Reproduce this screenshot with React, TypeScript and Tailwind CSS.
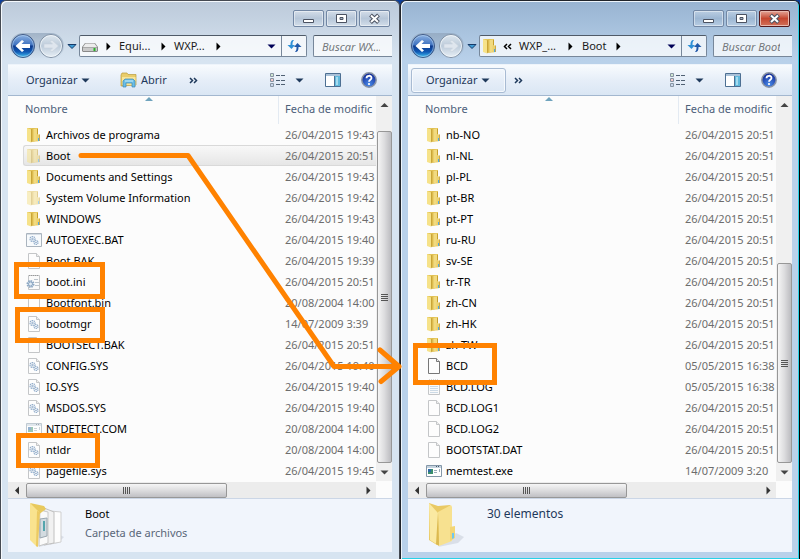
import type { ReactNode } from "react";

type Kind = "folder" | "faded" | "gear" | "batch" | "file" | "ini" | "lines" | "app" | "appFaded" | "bcd";
type Entry = { name: string; date: string; kind: Kind; selected?: boolean };

const leftFiles: Entry[] = [
  { name: "Archivos de programa", date: "26/04/2015 19:43", kind: "folder" },
  { name: "Boot", date: "26/04/2015 20:51", kind: "faded", selected: true },
  { name: "Documents and Settings", date: "26/04/2015 19:43", kind: "folder" },
  { name: "System Volume Information", date: "26/04/2015 19:42", kind: "faded" },
  { name: "WINDOWS", date: "26/04/2015 19:43", kind: "folder" },
  { name: "AUTOEXEC.BAT", date: "26/04/2015 19:40", kind: "batch" },
  { name: "Boot.BAK", date: "26/04/2015 19:39", kind: "file" },
  { name: "boot.ini", date: "26/04/2015 20:51", kind: "ini" },
  { name: "Bootfont.bin", date: "20/08/2004 14:00", kind: "file" },
  { name: "bootmgr", date: "14/07/2009 3:39", kind: "gear" },
  { name: "BOOTSECT.BAK", date: "26/04/2015 20:51", kind: "file" },
  { name: "CONFIG.SYS", date: "26/04/2015 19:40", kind: "gear" },
  { name: "IO.SYS", date: "26/04/2015 19:40", kind: "gear" },
  { name: "MSDOS.SYS", date: "26/04/2015 19:40", kind: "gear" },
  { name: "NTDETECT.COM", date: "20/08/2004 14:00", kind: "appFaded" },
  { name: "ntldr", date: "20/08/2004 14:00", kind: "gear" },
  { name: "pagefile.sys", date: "26/04/2015 19:45", kind: "gear" },
];

const languages = ["nb-NO", "nl-NL", "pl-PL", "pt-BR", "pt-PT", "ru-RU", "sv-SE", "tr-TR", "zh-CN", "zh-HK", "zh-TW"];

const rightFiles: Entry[] = [
  ...languages.map((name): Entry => ({ name, date: "26/04/2015 20:51", kind: "folder" })),
  { name: "BCD", date: "05/05/2015 16:38", kind: "bcd" },
  { name: "BCD.LOG", date: "05/05/2015 16:38", kind: "lines" },
  { name: "BCD.LOG1", date: "26/04/2015 20:51", kind: "file" },
  { name: "BCD.LOG2", date: "26/04/2015 20:51", kind: "file" },
  { name: "BOOTSTAT.DAT", date: "26/04/2015 20:51", kind: "file" },
  { name: "memtest.exe", date: "14/07/2009 3:20", kind: "app" },
];

function Folder() {
  return (
    <>
      <path d="M1 1h6v14l-2-1H1z" fill="#e3c45a" />
      <path d="M1 1l4 1.500v13L1 14z" fill="#f6e289" />
      <path d="M5 2.500L6.500 1.500V14L5 15.500z" fill="#c9a437" />
      <path d="M6.500 1H12v13l-5.500 1z" fill="#e2c252" />
      <path d="M7.500 2L11 1.500V13.500l-3.500 1z" fill="#f1da80" />
      <path d="M11 2h1v5h-1z" fill="#c79f2c" />
      <path d="M10.500 7.500h3V14l-3 .5z" fill="#ecd06b" />
      <path d="M13 7.500h.8V14H13z" fill="#bd9a35" />
      <path d="M12 11h1v3h-1z" fill="#4fa8e0" />
    </>
  );
}

function Sheet({ stroke = "#c4c6c8" }: { stroke?: string }) {
  return (
    <>
      <path d="M2.500.500h8l3 3v12h-11z" fill="#fdfdfd" stroke={stroke} />
      <path d="M10.500.500v3h3" fill="#eee" stroke={stroke} />
    </>
  );
}

function Gears() {
  return (
    <g fill="none" stroke="#8fabca">
      <circle cx="6.500" cy="7" r="2.500" strokeDasharray="1.500 .6" strokeWidth="1.200" />
      <circle cx="6.500" cy="7" r=".8" />
      <circle cx="10" cy="10.500" r="2" strokeDasharray="1.300 .6" strokeWidth="1.200" />
      <circle cx="10" cy="10.500" r=".5" />
    </g>
  );
}

function AppWindow() {
  return (
    <>
      <path d="M.500 2.500h15v11H.500z" fill="#fff" stroke="#8497a8" />
      <path d="M1 3h14v2H1z" fill="#c4d2de" />
      <path d="M10 3h1v1h-1zM12 3h1v1h-1z" fill="#456" />
      <path d="M2 6h5v5H2z" fill="#3b8f6d" />
      <path d="M2 6h3v3H2z" fill="#2d69a5" />
      <path d="M8 7.500h3M8 9.500h3M13.500 6v3" stroke="#9aacb8" />
    </>
  );
}

function FileIcon({ kind }: { kind: Kind }) {
  const faded = kind === "faded" || kind === "appFaded";
  return (
    <svg width="16" height="16" viewBox="0 0 16 16" className={faded ? "shrink-0 opacity-50" : "shrink-0"} aria-hidden="true">
      {(kind === "folder" || kind === "faded") && <Folder />}
      {kind === "file" && <Sheet />}
      {kind === "bcd" && <Sheet stroke="#777" />}
      {kind === "gear" && <><Sheet /><Gears /></>}
      {kind === "batch" && (
        <>
          <path d="M.500 1.500h15v13H.500z" fill="#f7fafc" stroke="#aab4be" />
          <path d="M1 2h14v1H1z" fill="#d5dde5" />
          <Gears />
        </>
      )}
      {kind === "ini" && (
        <>
          <path d="M2.500 1.500h11v14h-11z" fill="#fafafa" stroke="#c4c6c8" />
          <path d="M3 1.500h10" stroke="#999" strokeDasharray="1 1" strokeWidth="1" />
          <path d="M8 5.500h4M9 8.500h4M9 11.500h4" stroke="#bbc4cc" />
          <circle cx="4.500" cy="10" r="3" fill="#e2ecf5" stroke="#8fa9c4" strokeWidth="2" strokeDasharray="1.500 .8" />
          <circle cx="4.500" cy="10" r="2" fill="none" stroke="#8fa9c4" />
        </>
      )}
      {kind === "lines" && (
        <>
          <path d="M2.500 1.500h11v14h-11z" fill="#fafafa" stroke="#c4c6c8" />
          <path d="M3 1.500h10" stroke="#aaa" strokeDasharray="1 1" strokeWidth="2" />
          <path d="M4 5.500h8M4 7.500h8M4 9.500h8M4 11.500h8M4 13.500h8" stroke="#ccdae6" />
        </>
      )}
      {(kind === "app" || kind === "appFaded") && <AppWindow />}
    </svg>
  );
}

function Triangle({ dir, color = "#000" }: { dir: "right" | "left" | "down" | "up"; color?: string }) {
  const paths = { right: "M2.500 .500l4 4-4 4z", left: "M6 .500v8L2 4.500z", down: "M.500 2.500h8l-4 4z", up: "M.500 6h8l-4-4z" };
  return (
    <svg width="9" height="9" viewBox="0 0 9 9" className="shrink-0" aria-hidden="true">
      <path d={paths[dir]} fill={color} />
    </svg>
  );
}

function Chevrons({ flip = false, color = "#1e395b" }: { flip?: boolean; color?: string }) {
  return (
    <svg width="9" height="7" viewBox="0 0 9 7" className={flip ? "shrink-0 rotate-180" : "shrink-0"} aria-hidden="true">
      <path d="M1 1l2.500 2.500L1 6M5 1l2.500 2.500L5 6" fill="none" stroke={color} strokeWidth="1.500" />
    </svg>
  );
}

function NavButtons({ id }: { id: string }) {
  return (
    <div className="flex shrink-0 items-center">
      <div className="flex h-[26px] w-[54px] items-center justify-between rounded-full bg-gradient-to-b from-[#8fa3ba]/70 to-transparent">
        <button aria-label="Atrás" className="block">
          <svg width="26" height="26" viewBox="0 0 26 26">
            <defs>
              <linearGradient id={`back-${id}`} x1="0" y1="0" x2="0" y2="1">
                <stop offset="0" stopColor="#8fb4e4" />
                <stop offset=".45" stopColor="#3f72bf" />
                <stop offset=".5" stopColor="#0d3a8e" />
                <stop offset=".75" stopColor="#0f58b4" />
                <stop offset="1" stopColor="#45c6f4" />
              </linearGradient>
            </defs>
            <circle cx="13" cy="13" r="11.500" fill={`url(#back-${id})`} stroke="#405a86" />
            <circle cx="13" cy="13" r="10.500" fill="none" stroke="#b5d4f2" strokeOpacity=".6" />
            <path d="M5.500 13l6.500-6 2 1.500-2.500 2.500H20v4h-8.500l2.500 2.500-2 1.500z" fill="#fff" />
          </svg>
        </button>
        <button aria-label="Adelante" className="block">
          <svg width="26" height="26" viewBox="0 0 26 26">
            <defs>
              <linearGradient id={`fwd-${id}`} x1="0" y1="0" x2="0" y2="1">
                <stop offset="0" stopColor="#dfe7ef" />
                <stop offset=".5" stopColor="#bccbda" />
                <stop offset="1" stopColor="#e8eff6" />
              </linearGradient>
            </defs>
            <circle cx="13" cy="13" r="11.500" fill={`url(#fwd-${id})`} stroke="#7f8fa3" />
            <circle cx="13" cy="13" r="10.500" fill="none" stroke="#f3f7fb" strokeOpacity=".8" />
            <path d="M20.500 13L14 7l-2 1.500 2.500 2.500H6v4h8.500L12 17.500l2 1.500z" fill="#dfe6ee" stroke="#c7d1dc" strokeWidth=".6" />
          </svg>
        </button>
      </div>
      <button aria-label="Páginas recientes" className="ml-[3px] block w-3">
        <svg width="10" height="7" viewBox="0 0 10 7">
          <path d="M1 1.500h8L5 5.500z" fill="#3d9bd5" stroke="#173a68" />
        </svg>
      </button>
    </div>
  );
}

function CaptionButton({ label, close, children }: { label: string; close?: boolean; children: ReactNode }) {
  return (
    <button
      aria-label={label}
      className={
        close
          ? "flex h-[17px] w-[31px] items-center justify-center rounded-[2px] border border-[#55191c] bg-gradient-to-b from-[#e2a598] via-[#c5462f] via-50% to-[#d0705a] shadow-[inset_0_0_0_1px_#e9b9ae]"
          : "flex h-[17px] w-[31px] items-center justify-center rounded-[2px] border border-[#7287a4] bg-gradient-to-b from-white/30 via-[#8ea5c0]/25 via-50% to-white/20 shadow-[inset_0_0_0_1px_rgb(255_255_255/0.45)]"
      }
    >
      <svg width="13" height="11" viewBox="0 0 13 11">{children}</svg>
    </button>
  );
}

function DriveIcon() {
  return (
    <svg width="16" height="16" viewBox="0 0 16 16" className="shrink-0" aria-hidden="true">
      <path d="M3 5h10l3 4v4l-1 1H1l-1-1V9z" fill="#898989" />
      <path d="M3.500 5.500h9L15 9H1z" fill="#ececec" />
      <path d="M1 9.500h14v3.500H1z" fill="#c9c9c9" />
      <path d="M11.500 10h2v3h-2z" fill="#28b428" />
    </svg>
  );
}

function OpenIcon() {
  return (
    <svg width="17" height="16" viewBox="0 0 17 16" aria-hidden="true">
      <path d="M1 3l1-2h5l1 1.500h8V13l-15 1z" fill="#e9cd6b" stroke="#b99b3b" strokeWidth=".7" />
      <path d="M2 5h13.500v8H2z" fill="#f7e59a" />
      <path d="M3 15V9l2-2h8l2 2v6h-3v-4H6v4z" fill="#69bee6" stroke="#3c86b4" strokeWidth=".7" />
      <path d="M5 8.500h8v1H5z" fill="#c9edfb" />
    </svg>
  );
}

function ViewControls({ id }: { id: string }) {
  return (
    <div className="ml-auto flex shrink-0 items-center">
      <button aria-label="Cambiar la vista" className="mr-[21px] flex items-center gap-[9px]">
        <svg width="16" height="14" viewBox="0 0 16 14">
          <g fill="#fff" stroke="#8794a3">
            <path d="M.500.500h3v3h-3zM.500 5.500h3v3h-3zM.500 10.500h3v3h-3z" />
          </g>
          <path d="M1.500 1.500h1v1h-1z" fill="#45a04b" />
          <path d="M1.500 6.500h1v1h-1z" fill="#d32f2f" />
          <path d="M1.500 11.500h1v1h-1z" fill="#2a62b5" />
          <path d="M6 2.500h4M11 2.500h4M6 7.500h4M11 7.500h4M6 11.500h4M11 11.500h4" stroke="#4f6073" />
        </svg>
        <Triangle dir="down" color="#1e395b" />
      </button>
      <button aria-label="Mostrar el panel de vista previa" className="mr-5">
        <svg width="16" height="14" viewBox="0 0 16 14" className="block">
          <path d="M.500.500h15v13H.500z" fill="#fff" stroke="#4d6f92" />
          <path d="M1 1h14v2H1z" fill="#a9c1d8" />
          <path d="M10 3h5v10h-5z" fill="#62b9dc" />
          <path d="M9.500 3v10" stroke="#4d6f92" />
          <path d="M11 4h2v8h-2z" fill="#a5dbef" />
        </svg>
      </button>
      <button aria-label="Obtener ayuda" className="mr-[15px]">
        <svg width="16" height="16" viewBox="0 0 16 16" className="block">
          <defs>
            <radialGradient id={`help-${id}`} cx=".5" cy=".8" r=".7">
              <stop offset="0" stopColor="#4a8be8" />
              <stop offset="1" stopColor="#16309b" />
            </radialGradient>
          </defs>
          <circle cx="8" cy="8" r="7.200" fill={`url(#help-${id})`} stroke="#8b95a5" strokeWidth="1.500" />
          <path d="M5.500 6.200C5.500 3 10.500 3 10.500 6 10.500 7.800 8 7.800 8 9.800" fill="none" stroke="#fff" strokeWidth="1.800" />
          <circle cx="8" cy="12" r="1.100" fill="#fff" />
        </svg>
      </button>
    </div>
  );
}

function FileTable({ files }: { files: Entry[] }) {
  return (
    <table className="w-full table-fixed border-collapse">
      <thead>
        <tr className="h-7 text-left text-[#4c607a]">
          <th scope="col" className="p-0 font-normal">
            <div className="flex h-7 flex-col border-r border-[#e3eaf2] pl-3">
              <svg width="8" height="4" viewBox="0 0 8 4" className="mt-px self-center" aria-hidden="true">
                <path d="M0 4l4-4 4 4z" fill="#6fa3bd" />
              </svg>
              <span className="pl-[5px]">Nombre</span>
            </div>
          </th>
          <th scope="col" className="w-[97px] p-0 font-normal">
            <div className="h-7 whitespace-nowrap pl-[6px] pt-[5px]">Fecha de modific</div>
          </th>
        </tr>
      </thead>
      <tbody>
        {files.map((f) => (
          <tr key={f.name} className="h-[21px]">
            <td className="p-0 pl-[15px]">
              <div
                className={
                  f.selected
                    ? "flex h-[21px] items-center gap-1 rounded-l-[3px] border border-r-0 border-[#d9d9d9] bg-gradient-to-b from-[#f8f8f8] to-[#e6e6e6] pl-[2px]"
                    : "flex h-[21px] items-center gap-1 pl-[3px]"
                }
              >
                <FileIcon kind={f.kind} />
                <span className="whitespace-nowrap">{f.name}</span>
              </div>
            </td>
            <td className="p-0">
              <div
                className={
                  f.selected
                    ? "flex h-[21px] items-center whitespace-nowrap border-y border-[#d9d9d9] bg-gradient-to-b from-[#f8f8f8] to-[#e6e6e6] pl-[6px] text-[#6d6d6d]"
                    : "flex h-[21px] items-center whitespace-nowrap pl-[6px] text-[#6d6d6d]"
                }
              >
                {f.date}
              </div>
            </td>
          </tr>
        ))}
      </tbody>
    </table>
  );
}

function VerticalScroll({ short }: { short?: boolean }) {
  return (
    <div className="flex w-4 shrink-0 flex-col items-center bg-[#f0f0f0]">
      <button aria-label="Subir" className="flex h-[18px] items-center"><Triangle dir="up" color="#444" /></button>
      <div className={short ? "h-[149px]" : "h-[17px]"} />
      <div className="flex w-[15px] flex-1 flex-col items-center justify-center gap-px rounded-[2px] border border-[#979797] bg-gradient-to-r from-[#f5f5f5] via-[#dcdcde] to-[#bcbcc0]">
        {[0, 1, 2, 3].map((n) => <div key={n} className="h-px w-[7px] bg-[#555]" />)}
      </div>
      <button aria-label="Bajar" className="flex h-[18px] items-center"><Triangle dir="down" color="#444" /></button>
    </div>
  );
}

function HorizontalScroll() {
  return (
    <div className="mr-4 flex h-4 items-center bg-[#ececec]">
      <button aria-label="Izquierda" className="flex w-[18px] justify-center"><Triangle dir="left" color="#333" /></button>
      <div className="flex h-[15px] w-[201px] items-center justify-center gap-px rounded-[2px] border border-[#979797] bg-gradient-to-b from-[#f5f5f5] via-[#dcdcde] to-[#c0c0c4]">
        {[0, 1, 2, 3].map((n) => <div key={n} className="h-[7px] w-px bg-[#555]" />)}
      </div>
      <button aria-label="Derecha" className="ml-auto flex w-4 justify-center"><Triangle dir="right" color="#333" /></button>
    </div>
  );
}

type WindowProps = {
  id: string;
  active?: boolean;
  crumbs: ReactNode;
  search: string;
  tools: ReactNode;
  files: Entry[];
  details: ReactNode;
};

function ExplorerWindow({ id, active, crumbs, search, tools, files, details }: WindowProps) {
  return (
    <section
      aria-label={id}
      className={
        active
          ? "min-w-0 overflow-hidden rounded-t-[6px] border-x border-t border-[#20242b] border-r-black bg-[#b9d1ea] bg-[linear-gradient(#98b4d2,#b9d1ea_60px)] pb-[7px] shadow-[inset_1px_1px_0_#edf5fc,inset_-1px_-1px_0_#29d2e8]"
          : "min-w-0 overflow-hidden rounded-t-[6px] border-x border-t border-[#454a52] bg-[#d7e4f1] bg-[linear-gradient(#bccada,#d7e4f1_60px)] pb-[7px] shadow-[inset_1px_1px_0_#f5f9fd]"
      }
    >
      <header className="flex h-8 justify-end gap-0.5 pr-[9px] pt-[9px]">
        <CaptionButton label="Minimizar"><path d="M1.500 6.500h10v3h-10z" fill="#fff" stroke="#4b5261" /></CaptionButton>
        <CaptionButton label="Maximizar">
          <path d="M1.500 1.500h10v8h-10z" fill="#fff" stroke="#4b5261" />
          <path d="M5 4.500h3v2H5z" fill="#a8b6c6" stroke="#4b5261" />
        </CaptionButton>
        <CaptionButton label="Cerrar" close={active}>
          <path d="M2.500 2l8 7.500M10.500 2l-8 7.500" stroke="#4b5261" strokeWidth="4" />
          <path d="M3 2.500l7 6.500M10 2.500l-7 6.500" stroke="#fff" strokeWidth="2" />
        </CaptionButton>
      </header>
      <div className="flex h-[31px] items-start pl-[9px] pr-[7px]">
        <NavButtons id={id} />
        <nav aria-label="Ruta" className="mt-[2px] flex h-[22px] min-w-0 flex-1 rounded-[2px] border border-[#77879a] border-t-[#4f5a68] bg-white/75 text-[#1b1b1b]">
          <div className="flex min-w-0 flex-1 items-center pl-[2px]">
            {crumbs}
            <button aria-label="Ubicaciones anteriores" className="ml-auto mr-[5px]"><Triangle dir="down" color="#000057" /></button>
          </div>
          <button aria-label="Actualizar" className="flex w-[25px] items-center justify-center border-l border-[#77879a]">
            <svg width="15" height="14" viewBox="0 0 15 14">
              <path d="M7 1C4 1 3.500 3 3.500 6H.500L4.500 10 8 6H5.500C5.500 4 5.500 2.500 7 1z" fill="#2e8fd6" />
              <path d="M8 13c3 0 3.500-2 3.500-5h3L10.500 4 7 8h2.500c0 2 0 3.500-1.500 5z" fill="#1f57a8" />
            </svg>
          </button>
        </nav>
        <input
          type="search"
          aria-label={search}
          placeholder={search}
          className="ml-[6px] mt-[2px] h-[22px] w-[79px] shrink-0 rounded-l-[2px] border border-r-0 border-[#77879a] border-t-[#4f5a68] bg-white/75 pl-2 italic outline-none placeholder:text-[#73777c]"
        />
      </div>
      <div className="mx-[7px]">
        <div className="flex h-8 items-center border-b border-[#a3b7cf] border-t border-t-[#eef4fb] bg-gradient-to-b from-[#f8fbfe] via-[#e6eef8] via-50% to-[#dae6f4] text-[#1e395b]">
          {tools}
          <ViewControls id={id} />
        </div>
        <div className="flex bg-[#fcfcfc] pb-px">
          <div className="min-w-0 flex-1 overflow-hidden"><FileTable files={files} /></div>
          <VerticalScroll short={active} />
        </div>
        <div className="bg-[#fcfcfc]"><HorizontalScroll /></div>
        <footer className="flex h-[54px] border-t border-[#cbd6e6] bg-[#f1f5fc]">{details}</footer>
      </div>
    </section>
  );
}

function OrganizeButton({ boxed }: { boxed?: boolean }) {
  return (
    <button
      className={
        boxed
          ? "ml-[3px] flex h-[25px] w-[95px] items-center gap-1 rounded-[3px] border border-[#a8bbd3] pl-[14px] shadow-[inset_0_0_0_1px_#f6f9fd]"
          : "ml-[3px] flex h-[25px] w-[95px] items-center gap-1 border border-transparent pl-[14px]"
      }
    >
      Organizar
      <Triangle dir="down" color="#1e395b" />
    </button>
  );
}

function LargeFolder({ documents }: { documents?: boolean }) {
  return (
    <svg width="42" height="50" viewBox="0 0 42 50" className="ml-[18px] mt-[2px] shrink-0" aria-hidden="true">
      <path d="M12 46l20-4 6-6-8-4z" fill="#596577" opacity=".15" />
      {documents ? (
        <>
          <path d="M24 10l11 1v30l-11 2z" fill="#fdfdfd" stroke="#cfcfcf" />
          <path d="M18 7l10 4v31l-10 2z" fill="#f1f1f1" stroke="#c0c0c0" />
          <path d="M14 9l8 2v31l-9 3z" fill="#fafafa" stroke="#c8c8c8" />
          <path d="M14 18l7-1v18l-7 2z" fill="#d3dbe0" stroke="#9ba7b0" />
          <path d="M17 20h2v10h-2z" fill="#55a5ad" />
          <path d="M4 2l14 3 2 3-8 6z" fill="#e8c95d" />
          <path d="M4 2l9 9-2 35-7-7z" fill="#f9e38f" />
          <path d="M11 10l3 1-2 35-2-1z" fill="#ecca62" />
        </>
      ) : (
        <>
          <path d="M3 2l9 3 12-1 1 3v32l-14 5-8-5z" fill="#e9c964" />
          <path d="M12 11l13-7 1 2v34l-13 5z" fill="#f7e190" />
          <path d="M3 2l9 10v32l-8-5z" fill="#fae9a2" />
          <path d="M12 11l1 34-3-2z" fill="#dcb94f" />
          <path d="M24 26l5-1v12l-5 3z" fill="#f3d676" />
          <path d="M26 32h2v5l-2 1z" fill="#6fc7ef" />
        </>
      )}
    </svg>
  );
}

function Annotations() {
  return (
    <svg width="800" height="559" viewBox="0 0 800 559" className="pointer-events-none absolute left-0 top-0" aria-hidden="true">
      <g fill="none" stroke="#ff8200" strokeWidth="5">
        <path d="M16.500 264.500h86v32h-86z" />
        <path d="M17.500 309.500h85v31h-85z" />
        <path d="M18.500 435.500h79v30h-79z" />
        <path d="M415.500 345.500h79v37h-79z" />
        <path d="M81 155.500h107l146 211h65M380 350l19 16.500-18 15" strokeLinecap="round" strokeLinejoin="round" />
      </g>
    </svg>
  );
}

export default function App() {
  return (
    <main className="relative grid w-full grid-cols-2 overflow-hidden bg-[#0c3f9c] font-['Noto_Sans',sans-serif] text-[11px] leading-[16px] text-black">
      <ExplorerWindow
        id="WXP"
        search="Buscar WX..."
        files={leftFiles}
        crumbs={
          <>
            <DriveIcon />
            <span className="mx-[6px]"><Triangle dir="right" /></span>
            <span className="w-10">Equi...</span>
            <span className="mr-[6px]"><Triangle dir="right" /></span>
            <span className="w-10">WXP...</span>
            <Triangle dir="right" />
          </>
        }
        tools={
          <>
            <OrganizeButton />
            <button className="ml-[14px] flex items-center gap-1"><OpenIcon />Abrir</button>
            <button aria-label="Más comandos" className="ml-[22px]"><Chevrons /></button>
          </>
        }
        details={
          <>
            <LargeFolder documents />
            <div className="ml-[17px] pt-[7px]">
              <p>Boot</p>
              <p className="mt-[3px] text-[#5a6779]">Carpeta de archivos</p>
            </div>
          </>
        }
      />
      <ExplorerWindow
        id="Boot"
        active
        search="Buscar Boot"
        files={rightFiles}
        crumbs={
          <>
            <svg width="16" height="16" viewBox="0 0 16 16" className="shrink-0" aria-hidden="true"><Folder /></svg>
            <span className="ml-[5px] mr-[7px]"><Chevrons flip color="#000" /></span>
            <span className="w-[47px]">WXP_...</span>
            <span className="mr-[7px]"><Triangle dir="right" /></span>
            <span className="w-8">Boot</span>
            <Triangle dir="right" />
          </>
        }
        tools={
          <>
            <OrganizeButton boxed />
            <button aria-label="Más comandos" className="ml-2"><Chevrons /></button>
          </>
        }
        details={
          <>
            <LargeFolder />
            <p className="ml-[19px] pt-[7px] text-[12px] text-[#1e395b]">30 elementos</p>
          </>
        }
      />
      <Annotations />
    </main>
  );
}
